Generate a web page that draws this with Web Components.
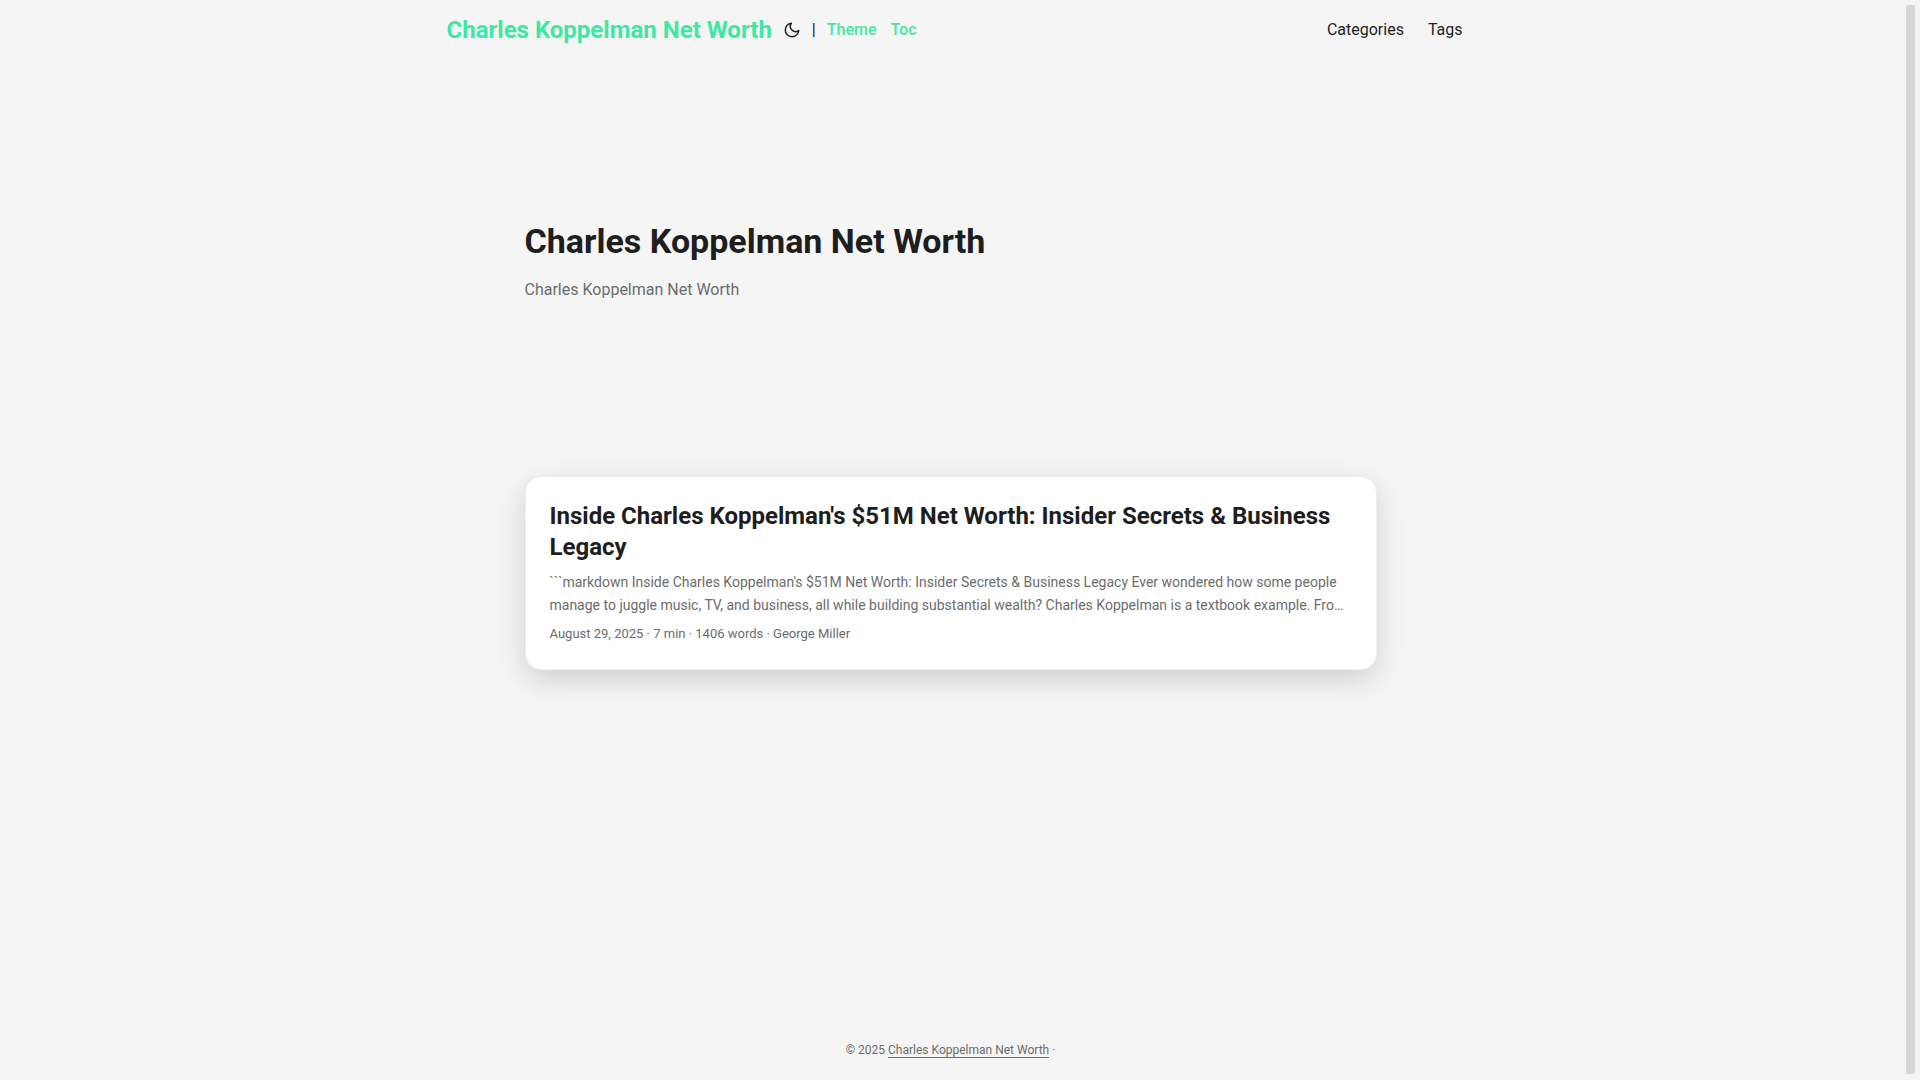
<!DOCTYPE html>
<html lang="en">
<head>
<meta charset="UTF-8">
<meta name="viewport" content="width=device-width, initial-scale=1">
<title>Charles Koppelman Net Worth</title>
<style>
    :root {
        --gap: 24px;
        --theme: #f5f5f5;
        --entry: #ffffff;
        --primary: #1e1e1e;
        --secondary: #6c6c6c;
        --border: #eeeeee;
        --accent: #3ee8a4;
        --thumb: #d6d6d6;
    }

    body {
        margin: 0;
        background: var(--theme);
        color: var(--primary);
        font-family: Roboto, "Open Sans", sans-serif;
        font-size: 16px;
        line-height: 26px;
    }
</style>
</head>
<body>
<blog-page>
    <site-header slot="header" name="Charles Koppelman Net Worth"></site-header>
    <home-info heading="Charles Koppelman Net Worth">Charles Koppelman Net Worth</home-info>
    <post-entry heading="Inside Charles Koppelman's $51M Net Worth: Insider Secrets &amp; Business Legacy">
        ```markdown Inside Charles Koppelman's $51M Net Worth: Insider Secrets &amp; Business Legacy Ever wondered how some people manage to juggle music, TV, and business, all while building substantial wealth? Charles Koppelman is a textbook example. Fro…
        <span slot="meta">August 29, 2025 · 7 min · 1406 words · George Miller</span>
    </post-entry>
    <site-footer slot="footer" name="Charles Koppelman Net Worth"></site-footer>
</blog-page>

<script>
/**
 * Page shell: header, main column, footer and the scroll rail
 */
class BlogPage extends HTMLElement {
    constructor() {
        super();
        this.attachShadow({ mode: 'open' });
    }

    connectedCallback() {
        this.shadowRoot.innerHTML = `
            <style>
                :host {
                    display: grid;
                    grid-template-columns: minmax(0, 1fr) 19px;
                    min-height: 100vh;
                }

                .page {
                    display: flex;
                    flex-direction: column;
                }

                main {
                    flex: 1;
                    box-sizing: border-box;
                    width: 100%;
                    max-width: 900px;
                    margin: 0 auto;
                    padding: var(--gap);
                }

                .rail {
                    display: flex;
                    box-sizing: border-box;
                    padding: 5px 5px 6px;
                }

                .thumb {
                    flex: 1;
                    border-radius: 2px;
                    background: var(--thumb);
                }
            </style>
            <div class="page">
                <slot name="header"></slot>
                <main><slot></slot></main>
                <slot name="footer"></slot>
            </div>
            <div class="rail" aria-hidden="true"><div class="thumb"></div></div>
        `;
    }
}

/**
 * Top navigation with logo, theme toggle and menu
 */
class SiteHeader extends HTMLElement {
    constructor() {
        super();
        this.attachShadow({ mode: 'open' });
    }

    connectedCallback() {
        this.render();
    }

    render() {
        this.shadowRoot.innerHTML = `
            ${this.getStyles()}
            ${this.getTemplate()}
        `;
    }

    getStyles() {
        return `
            <style>
                :host {
                    display: block;
                }

                nav {
                    display: flex;
                    justify-content: space-between;
                    box-sizing: border-box;
                    max-width: 1072px;
                    margin: 0 auto;
                    padding: 0 var(--gap) 0 32px;
                    line-height: 60px;
                }

                a {
                    color: inherit;
                    text-decoration: none;
                }

                .logo,
                .links,
                .menu {
                    display: flex;
                    align-items: center;
                }

                .logo {
                    font-weight: 500;
                }

                .name {
                    color: var(--accent);
                    font-size: 24px;
                    font-weight: 700;
                }

                button {
                    display: flex;
                    margin: 0 11px;
                    padding: 0;
                    border: 0;
                    background: none;
                    color: inherit;
                    cursor: pointer;
                }

                .links {
                    gap: 14px;
                    margin-left: 11px;
                    color: var(--accent);
                }

                .menu {
                    gap: var(--gap);
                    margin: 0;
                    padding: 0;
                    list-style: none;
                }
            </style>
        `;
    }

    getTemplate() {
        const quickLinks = ['Theme', 'Toc'];
        const menu = ['Categories', 'Tags'];

        return `
            <nav aria-label="Main">
                <div class="logo">
                    <a class="name" href="#">${this.getAttribute('name')}</a>
                    <button type="button" aria-label="Toggle theme">
                        <svg width="18" height="18" viewBox="0 0 24 24" fill="none" stroke="currentColor" stroke-width="2" stroke-linecap="round" stroke-linejoin="round" aria-hidden="true">
                            <path d="M21 12.79A9 9 0 1 1 11.21 3 7 7 0 0 0 21 12.79z"></path>
                        </svg>
                    </button>
                    <span>|</span>
                    <div class="links">
                        ${quickLinks.map(text => `<a href="#${text.toLowerCase()}">${text}</a>`).join('')}
                    </div>
                </div>
                <ul class="menu">
                    ${menu.map(text => `<li><a href="#${text.toLowerCase()}">${text}</a></li>`).join('')}
                </ul>
            </nav>
        `;
    }
}

/**
 * Intro block on the home page
 */
class HomeInfo extends HTMLElement {
    constructor() {
        super();
        this.attachShadow({ mode: 'open' });
    }

    connectedCallback() {
        this.shadowRoot.innerHTML = `
            <style>
                :host {
                    display: flex;
                    flex-direction: column;
                    justify-content: center;
                    min-height: 320px;
                    margin: 24px 0 48px;
                }

                h1 {
                    margin: 0;
                    font-size: 34px;
                    line-height: 44px;
                }

                p {
                    margin: 14px 0;
                    color: var(--secondary);
                }
            </style>
            <h1>${this.getAttribute('heading')}</h1>
            <p><slot></slot></p>
        `;
    }
}

/**
 * Post card
 */
class PostEntry extends HTMLElement {
    constructor() {
        super();
        this.attachShadow({ mode: 'open' });
    }

    connectedCallback() {
        this.shadowRoot.innerHTML = `
            <style>
                :host {
                    display: block;
                }

                article {
                    padding: var(--gap) var(--gap) 26px;
                    border: 1px solid var(--border);
                    border-radius: 16px;
                    background: var(--entry);
                    box-shadow: 0 10px 30px rgba(0, 0, 0, 0.15);
                }

                h2 {
                    margin: 0;
                    font-size: 24px;
                    line-height: 31px;
                }

                a {
                    color: inherit;
                    text-decoration: none;
                }

                p {
                    margin: 8px 0;
                    color: var(--secondary);
                    font-size: 14px;
                    line-height: 23px;
                }

                footer {
                    color: var(--secondary);
                    font-size: 13px;
                    line-height: 18px;
                }
            </style>
            <article>
                <h2><a href="#post">${this.getAttribute('heading')}</a></h2>
                <p><slot></slot></p>
                <footer><slot name="meta"></slot></footer>
            </article>
        `;
    }
}

/**
 * Copyright line
 */
class SiteFooter extends HTMLElement {
    constructor() {
        super();
        this.attachShadow({ mode: 'open' });
    }

    connectedCallback() {
        this.shadowRoot.innerHTML = `
            <style>
                :host {
                    display: block;
                }

                footer {
                    padding: 18px var(--gap);
                    color: var(--secondary);
                    font-size: 12px;
                    line-height: 24px;
                    text-align: center;
                }

                a {
                    border-bottom: 1px solid var(--secondary);
                    color: inherit;
                    text-decoration: none;
                }
            </style>
            <footer>
                <span>&copy; 2025 <a href="#">${this.getAttribute('name')}</a></span>
                <span>·</span>
            </footer>
        `;
    }
}

customElements.define('blog-page', BlogPage);
customElements.define('site-header', SiteHeader);
customElements.define('home-info', HomeInfo);
customElements.define('post-entry', PostEntry);
customElements.define('site-footer', SiteFooter);
</script>
</body>
</html>
